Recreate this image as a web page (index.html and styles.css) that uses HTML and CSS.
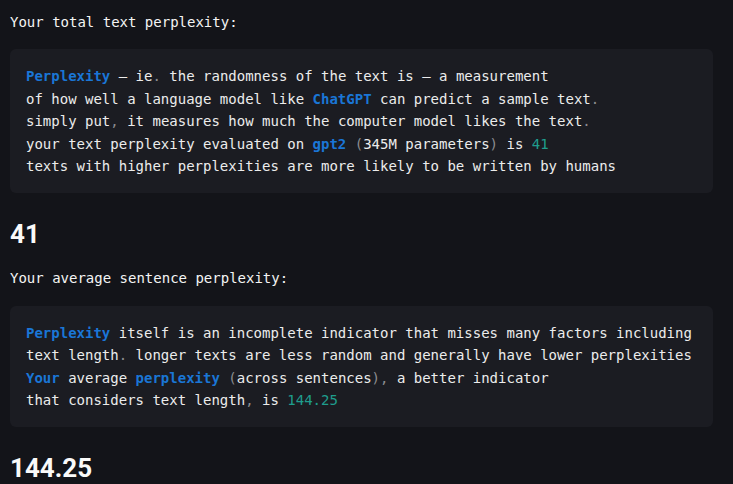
FILE: index.html
```html
<!DOCTYPE html>
<html>
<head>
<meta charset="utf-8">
<link rel="stylesheet" href="styles.css">
</head>
<body>
<main class="page">
  <p class="label">Your total text perplexity:</p>
  <pre class="code"><span class="kw">Perplexity</span> — ie<span class="pn">.</span> the randomness of the text is — a measurement
of how well a language model like <span class="kw">ChatGPT</span> can predict a sample text<span class="pn">.</span>
simply put<span class="pn">,</span> it measures how much the computer model likes the text<span class="pn">.</span>
your text perplexity evaluated on <span class="kw">gpt2</span> <span class="pn">(</span>345M parameters<span class="pn">)</span> is <span class="num">41</span>
texts with higher perplexities are more likely to be written by humans</pre>
  <h3 class="value">41</h3>
  <p class="label">Your average sentence perplexity:</p>
  <pre class="code"><span class="kw">Perplexity</span> itself is an incomplete indicator that misses many factors including
text length<span class="pn">.</span> longer texts are less random and generally have lower perplexities
<span class="kw">Your</span> average <span class="kw">perplexity</span> <span class="pn">(</span>across sentences<span class="pn">),</span> a better indicator
that considers text length<span class="pn">,</span> is <span class="num">144.25</span></pre>
  <h3 class="value">144.25</h3>
</main>
</body>
</html>
```
FILE: styles.css
```css
html, body {
  margin: 0;
  padding: 0;
  background: #131419;
}
.page {
  display: flex;
  flex-direction: column;
  padding: 11px 20px 0 10px;
}
.label {
  margin: 0;
  font-family: "DejaVu Sans Mono", "Liberation Mono", monospace;
  font-size: 14px;
  line-height: 22.4px;
  color: #f4f4f4;
}
.code {
  margin: 16px 0 0 0;
  padding: 16px 16px;
  background: #1b1c22;
  border-radius: 6px;
  font-family: "DejaVu Sans Mono", "Liberation Mono", monospace;
  font-size: 14px;
  line-height: 22.4px;
  color: #ececec;
  white-space: pre;
  overflow: hidden;
}
.kw {
  color: #1a76d6;
  font-weight: bold;
}
.pn {
  color: #8b8c90;
}
.num {
  color: #1f9d8d;
}
.value {
  margin: 24px 0 16px 0;
  font-family: Roboto, "Noto Sans", sans-serif;
  font-weight: 700;
  font-size: 26px;
  line-height: 34px;
  color: #fafafa;
}
```
